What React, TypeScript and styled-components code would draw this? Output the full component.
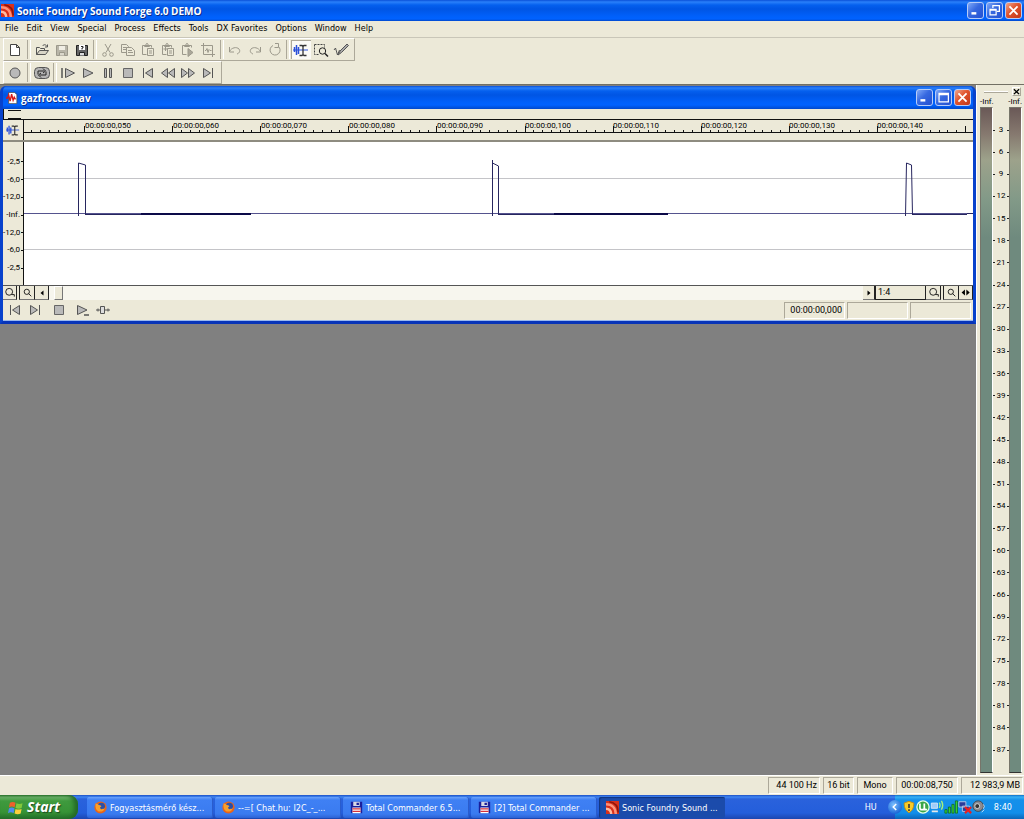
import React from "react";
import styled, { createGlobalStyle, css } from "styled-components";

const face = "#ece9d8";
const shade = "#aca899";
const uiFont = '"DejaVu Sans Condensed", "DejaVu Sans", sans-serif';
const numFont = 'Roboto, "Liberation Sans", sans-serif';
const titleFont = '"Open Sans", "Noto Sans", sans-serif';

const GlobalStyle = createGlobalStyle`
  * { box-sizing: border-box; }
  body { margin: 0; background: #808080; font: 9px/12px ${uiFont}; color: #000; }
  button { margin: 0; padding: 0; border: 0; background: none; font: inherit; color: inherit; }
  svg { display: block; }
`;

const Desktop = styled.div`
  min-height: 100vh;
  display: flex;
  flex-direction: column;
`;

/* ---------- title bars ---------- */

const TitleBar = styled.header<{ $child?: boolean }>`
  display: flex;
  align-items: center;
  gap: 3px;
  height: ${(p) => (p.$child ? 23 : 21)}px;
  padding: 0 2px 0 ${(p) => (p.$child ? 3 : 1)}px;
  background: linear-gradient(#0a50d8 0, #2a80fa 2px, #0560ee 5px, #0055e4 9px, #0060fa 16px, #0062ff 19px, #0048cc 100%);
  border-radius: ${(p) => (p.$child ? "5px 5px 0 0" : "0")};
`;

const TitleText = styled.h1`
  flex: 1;
  margin: 0;
  font: bold 10px/14px ${titleFont};
  color: #fff;
  text-shadow: 1px 1px 0 #0a2f8c;
  white-space: nowrap;
`;

const WindowButtons = styled.div`
  display: flex;
  gap: 2px;
`;

const CaptionButton = styled.button<{ $close?: boolean }>`
  width: 17px;
  height: 17px;
  border: 1px solid #b8ccf8;
  border-radius: 3px;
  display: grid;
  place-items: center;
  background: ${(p) =>
    p.$close
      ? "linear-gradient(135deg, #f0a58c, #e0532c 45%, #c2371a)"
      : "linear-gradient(135deg, #7fa8f8, #3668e0 45%, #2450d0)"};
`;

/* ---------- menu and toolbars ---------- */

const MenuBar = styled.nav`
  display: flex;
  align-items: flex-start;
  gap: 8px;
  height: 17px;
  padding: 0 5px;
  background: ${face};
  border-bottom: 1px solid #c9c6b8;
`;

const MenuItem = styled.button`
  line-height: 14px;
  white-space: nowrap;
`;

const ToolRow = styled.div`
  display: flex;
  height: 23px;
  background: ${face};
`;

const ToolBar = styled.div`
  display: flex;
  align-items: center;
  margin-left: 3px;
  padding-right: 3px;
  border: 1px solid #fff;
  border-right-color: ${shade};
  border-bottom-color: ${shade};
  padding-left: 1px;
`;

const Separator = styled.span<{ $w: number }>`
  width: ${(p) => p.$w}px;
  height: 19px;
  display: flex;
  justify-content: center;
  &::before {
    content: "";
    width: 2px;
    border-left: 1px solid ${shade};
    border-right: 1px solid #fff;
  }
`;

const ToolButton = styled.button<{ $on?: boolean }>`
  width: 20px;
  height: 19px;
  display: grid;
  place-items: center;
  &:disabled { color: #9b988b; }
  ${(p) =>
    p.$on &&
    css`
      background: #fbfaf5;
      box-shadow: inset 1px 1px 0 ${shade};
    `}
`;

/* ---------- work area ---------- */

const Main = styled.main`
  flex: 1;
  display: flex;
  align-items: stretch;
  border-top: 1px solid #716f64;
`;

const Workspace = styled.section`
  flex: 1;
  min-width: 0;
  background: #808080;
`;

const ChildWindow = styled.article`
  margin-top: 1px;
  border-radius: 6px 6px 0 0;
  border: solid #0842cc;
  border-width: 0 3px 3px;
  border-bottom-color: #0734b8;
  background: #0058e8;
`;

const WindowBody = styled.div`
  background: ${face};
`;

const Overview = styled.div`
  height: 11px;
  display: flex;
  padding: 1px 0 0 4px;
  border-bottom: 1px solid #111;
  border-left: 1px solid #111;
  &::before {
    content: "";
    width: 13px;
    border: 1px solid #111;
    border-width: 1px 0;
  }
`;

const RulerRow = styled.div`
  display: flex;
  height: 22px;
  border-bottom: 2px solid #8e8c80;
`;

const Corner = styled.button`
  width: 21px;
  display: grid;
  place-items: center;
  border-right: 1px solid #111;
`;

const Ruler = styled.div`
  flex: 1;
  min-width: 0;
  overflow: hidden;
`;

const TimeLabels = styled.ol`
  margin: 0;
  padding: 1px 0 0 61px;
  height: 6px;
  display: flex;
  list-style: none;
  font: 8px/9px ${numFont};
`;

const TimeLabel = styled.li`
  flex: 0 0 88px;
`;

const WaveRow = styled.div`
  display: flex;
  height: 144px;
  border-bottom: 1px solid #555;
`;

const LevelScale = styled.ol`
  width: 21px;
  margin: 0;
  padding: 11px 0 8px;
  list-style: none;
  display: flex;
  flex-direction: column;
  border-right: 1px solid #111;
  font: 8px/10px ${numFont};
`;

const Level = styled.li`
  flex: 1;
  display: flex;
  align-items: center;
  justify-content: flex-end;
  gap: 1px;
  &::after {
    content: "";
    width: 2px;
    height: 1px;
    background: #111;
  }
`;

const WaveArea = styled.div`
  flex: 1;
  min-width: 0;
  background: #fff;
  svg { width: 100%; height: 143px; }
`;

const ScrollRow = styled.div`
  display: flex;
  height: 14px;
  background: ${face};
`;

const MiniButton = styled.button<{ $w: number; $gap?: boolean }>`
  width: ${(p) => p.$w}px;
  display: grid;
  place-items: center;
  border-right: 1px solid #222;
  border-bottom: 1px solid #777;
  ${(p) => p.$gap && css`
    border-left: 1px solid #222;
    margin-left: 2px;
  `}
`;

const Track = styled.div`
  flex: 1;
  display: flex;
  padding-left: 5px;
  background: #f7f6ee;
`;

const Thumb = styled.div`
  width: 9px;
  background: ${face};
  border: 1px solid #fff;
  border-right-color: #777;
  border-bottom-color: #777;
`;

const Ratio = styled.output`
  width: 51px;
  padding-left: 2px;
  border: solid #222;
  border-width: 0 1px 1px;
  font: 9px/13px ${numFont};
`;

const Transport = styled.div`
  display: flex;
  align-items: center;
  height: 21px;
  padding: 0 2px;
  border-bottom: 1px solid #9ab8f0;
`;

const TransportButton = styled.button<{ $before?: number }>`
  width: 20px;
  height: 18px;
  margin-left: ${(p) => p.$before ?? 0}px;
  display: grid;
  place-items: center;
`;

const Fill = styled.div`
  flex: 1;
`;

const Sunken = styled.output<{ $w: number; $end?: boolean }>`
  flex: 0 0 ${(p) => p.$w}px;
  height: 17px;
  padding: 0 ${(p) => (p.$end ? 2 : 0)}px;
  text-align: ${(p) => (p.$end ? "right" : "center")};
  border: 1px solid ${shade};
  border-right-color: #fff;
  border-bottom-color: #fff;
  font: 9px/15px ${numFont};
  white-space: nowrap;
`;

const Boxes = styled.div`
  display: flex;
  gap: 2px;
`;

/* ---------- level meters ---------- */

const MeterPanel = styled.aside`
  width: 48px;
  display: flex;
  flex-direction: column;
  background: ${face};
  border-left: 1px solid #fff;
  padding: 0 2px 2px 3px;
`;

const MeterHead = styled.div`
  display: flex;
  align-items: center;
  gap: 4px;
  height: 12px;
  padding: 1px 1px 0 4px;
`;

const Grip = styled.span`
  flex: 1;
  height: 2px;
  border-top: 1px solid #fff;
  border-bottom: 1px solid ${shade};
`;

const CloseSmall = styled.button`
  width: 9px;
  height: 9px;
  display: grid;
  place-items: center;
  border: 1px solid #fff;
  border-right-color: ${shade};
  border-bottom-color: ${shade};
`;

const Peaks = styled.div`
  display: flex;
  justify-content: space-between;
  height: 10px;
  font: 8px/10px ${numFont};
`;

const Meters = styled.div`
  flex: 1;
  display: flex;
`;

const Bar = styled.div`
  width: 13px;
  border: 1px solid #77756a;
  border-right-color: #fff;
  border-bottom-color: #333;
  background: linear-gradient(#6a5957 0, #86796f 26px, #9da28b 52px, #839a88 90px, #6f8a7e 130px, #6f8a7e 100%);
`;

const MeterScale = styled.ol`
  flex: 1;
  margin: 0;
  padding: 12px 0;
  list-style: none;
  display: flex;
  flex-direction: column;
  font: 8px/10px ${numFont};
`;

const MeterMark = styled.li`
  flex: 1;
  display: flex;
  align-items: center;
  justify-content: space-between;
  &::before, &::after {
    content: "";
    width: 2px;
    height: 1px;
    background: #222;
  }
`;

/* ---------- status bar and taskbar ---------- */

const StatusBar = styled.footer`
  height: 20px;
  display: flex;
  align-items: center;
  justify-content: flex-end;
  gap: 3px;
  padding: 0 1px;
  background: ${face};
  border-top: 1px solid #fff;
`;

const TaskBar = styled.nav`
  height: 24px;
  display: flex;
  background: linear-gradient(#1d4fc4 0, #3f86f2 2px, #2a62dc 4px, #245edb 18px, #1c46b0 100%);
`;

const StartButton = styled.button`
  flex: 0 0 78px;
  display: flex;
  align-items: center;
  gap: 4px;
  padding-left: 8px;
  margin-right: 9px;
  border-radius: 0 9px 9px 0;
  background: linear-gradient(#2f7a30 0, #6fb46c 2px, #3f9a3e 6px, #379336 17px, #24702a 100%);
  box-shadow: inset -4px 0 4px #246a28;
  color: #fff;
  font: italic bold 14px/20px ${titleFont};
  text-shadow: 1px 1px 1px #1c4a1e;
`;

const Tasks = styled.div`
  flex: 1;
  min-width: 0;
  display: flex;
  gap: 2px;
  padding: 2px 0 1px;
`;

const Task = styled.button<{ $active?: boolean }>`
  flex: 0 1 126px;
  min-width: 0;
  display: flex;
  align-items: center;
  gap: 3px;
  padding: 0 7px;
  border-radius: 2px;
  color: #fff;
  white-space: nowrap;
  overflow: hidden;
  background: ${(p) =>
    p.$active ? "#1b4bab" : "linear-gradient(#6aa2fa 0, #3f80f4 3px, #3a7bf0 17px, #2c62d4 100%)"};
  box-shadow: ${(p) => (p.$active ? "inset 1px 1px 1px #12357f" : "inset -1px 0 0 #2a5ccc")};
`;

const Language = styled.span`
  align-self: center;
  margin-right: 18px;
  color: #fff;
`;

const Tray = styled.div`
  display: flex;
  align-items: center;
  padding-right: 12px;
  background: linear-gradient(#0f6fc8 0, #38b0f4 2px, #1590ea 5px, #118eea 18px, #0b66b8 100%);
  color: #fff;
`;

const TrayToggle = styled.button`
  width: 14px;
  height: 14px;
  margin-left: -7px;
  border-radius: 7px;
  display: grid;
  place-items: center;
  background: radial-gradient(circle at 40% 35%, #7cc0ff, #1f6ad8 70%);
`;

const Clock = styled.time`
  margin-left: 8px;
`;

/* ---------- icons ---------- */

const Glyph = ({ children, size = 16 }: { children: React.ReactNode; size?: number }) => (
  <svg width={size} height={size} viewBox="0 0 16 16" fill="none" stroke="currentColor" aria-hidden="true">
    {children}
  </svg>
);

const metal = "#b9b9b9";
const ink = "#555";

const clipboard = (
  <>
    <path d="M2.500 3.500h9v2M2.500 3.500v9h4M4.500 4.500v-1h1l1-2h1l1 2h1v1z" />
    <path d="M7.500 6.500h6v7h-6zM9 9h3M9 11h3" />
  </>
);

const art: Record<string, React.ReactNode> = {
  new: <path d="M3.500 2.500h6l3 3v8h-9zM9.500 2.500v3h3" fill="#fff" stroke="#444" />,
  open: (
    <g stroke={ink}>
      <path d="M2.500 12.500v-7h3l1 1h4v2" />
      <path d="M2.500 12.500l3-4h9l-3 4z" fill="#d8d5c8" />
      <path d="M8.500 4c1.500-2 3.500-1.500 4.500 0.500M13.500 2.500v2.500h-2.500" />
    </g>
  ),
  save: (
    <>
      <path d="M2.500 3.500h11v10h-11z" fill="#b8b5a8" />
      <path d="M5 4h6v4h-6z" fill="#f0eee4" stroke="none" />
      <path d="M5.500 13.500v-3h5v3" fill="#dad7ca" />
    </>
  ),
  saveAs: (
    <>
      <path d="M2.500 3.500h11v10h-11z" fill="#666" stroke="#222" />
      <path d="M5 3h6v5h-6z" fill="#fff" stroke="none" />
      <path d="M7 4.500h2v1.500h-1v1.500" stroke="#222" />
      <path d="M5.500 13.500v-3h5v3" fill="#ddd" stroke="#222" />
    </>
  ),
  cut: (
    <>
      <path d="M5 2l5 8.500M11 2l-5 8.500" />
      <circle cx="4.500" cy="12.500" r="1.800" />
      <circle cx="11.500" cy="12.500" r="1.800" />
    </>
  ),
  copy: (
    <>
      <path d="M1.500 2.500h5l2 2v6h-7zM3 5.500h4M3 7.500h4" />
      <path d="M6.500 5.500h5l3 3v5h-8z" fill={face} />
      <path d="M8 8.500h4M8 10.500h5" />
    </>
  ),
  paste: clipboard,
  pasteMix: (
    <>
      {clipboard}
      <path d="M3.500 7h4M5.500 5v4" />
    </>
  ),
  pastePlay: (
    <>
      <path d="M2.500 3.500h9v2M2.500 3.500v9h4M4.500 4.500v-1h1l1-2h1l1 2h1v1z" />
      <path d="M8 6.500l5 4-5 4z" fill="#aaa799" />
    </>
  ),
  crop: <path d="M3.500 1v11.500h11.500M1 3.500h11.500v11.500M5 8.500h1l1-2 1 4 1-3 1 1h1.500" />,
  undo: <path d="M2.500 5v5h4.500M2.500 9.500c2-4 7-5 9.500-2.500 1.500 2 0.500 4-2 5" />,
  redo: <path d="M13.500 5v5h-4.500M13.500 9.500c-2-4-7-5-9.500-2.500-1.500 2-0.500 4 2 5" />,
  repeat: <path d="M11 4a5 5 0 1 1-5-0.500M8 1.500h3.500v4h-4" />,
  edit: (
    <>
      <path d="M1.500 5v5M3.500 3v10M5.500 5v7" stroke="#2b50d8" strokeWidth="1.500" />
      <path d="M0 8h15" stroke="#2b50d8" />
      <path d="M6.500 3.500h2.500l1 1 1-1h2.500M10 4v9M6.500 13.500h2.500l1-1 1 1h2.500" stroke="#333" strokeWidth="1.300" />
    </>
  ),
  magnify: (
    <>
      <path d="M1.500 2.500h10v3M1.500 2.500v10h4" stroke="#444" strokeDasharray="2 1" />
      <circle cx="9.500" cy="9" r="3.200" stroke="#222" />
      <path d="M12 11.500l3 3" stroke="#222" strokeWidth="1.500" />
    </>
  ),
  pencil: (
    <g stroke={ink}>
      <path d="M1 8l1.500-2 2 7 2-5" />
      <path d="M5 13l2-4 7-7 1.500 1.500-7 7z" fill="#aaa" />
    </g>
  ),
  record: <circle cx="8" cy="8" r="5" fill={metal} stroke="#555" />,
  loop: (
    <g stroke={ink}>
      <rect x="0.500" y="2.500" width="15" height="11" rx="4" fill="#b4b4b4" />
      <path d="M4 9.500v-3.500h6M9 3.500l2.500 2.500-2.500 2M12 6.500v3.500h-6M7 8l-2.500 2 2.500 2.500" stroke="#222" />
    </g>
  ),
  playAll: (
    <g stroke={ink} fill={metal}>
      <path d="M2 3v10" strokeWidth="1.500" />
      <path d="M5.500 3.500l9 4.500-9 4.500z" />
    </g>
  ),
  play: <path d="M3.500 3.500l9.500 4.500-9.500 4.500z" fill={metal} stroke={ink} />,
  pause: <path d="M4.500 3.500h2v9h-2zM9.500 3.500h2v9h-2z" fill={metal} stroke={ink} />,
  stop: <path d="M3.500 3.500h9v9h-9z" fill={metal} stroke="#666" />,
  toStart: <path d="M3.500 3v10M12.500 3.500v9l-7-4.500z" fill={metal} stroke={ink} />,
  toEnd: <path d="M12.500 3v10M3.500 3.500v9l7-4.500z" fill={metal} stroke={ink} />,
  rewind: <path d="M7.500 3.500v9l-6-4.500zM14.500 3.500v9l-6-4.500z" fill={metal} stroke={ink} />,
  forward: <path d="M1.500 3.500v9l6-4.500zM8.500 3.500v9l6-4.500z" fill={metal} stroke={ink} />,
  playCursor: (
    <g stroke={ink}>
      <path d="M2.500 3.500l9.500 4.500-9.500 4.500z" fill={metal} />
      <path d="M9 13h5" strokeWidth="1.500" />
    </g>
  ),
  slider: (
    <g stroke={ink}>
      <path d="M1 8h14M3 6.500v3M13 6.500v3" />
      <path d="M5.500 4.500h4v7h-4z" fill="#ddd" />
    </g>
  ),
  zoomBig: (
    <g stroke="#111" strokeWidth="1.300">
      <circle cx="7.500" cy="7" r="5" />
      <path d="M11 11h4v3" />
    </g>
  ),
  zoomSmall: (
    <g stroke="#111" strokeWidth="1.300">
      <circle cx="7" cy="7" r="3.800" />
      <path d="M9.500 9.500l4 4" />
    </g>
  ),
  left: <path d="M11 3v10l-6-5z" fill="#000" stroke="none" />,
  right: <path d="M5 3v10l6-5z" fill="#000" stroke="none" />,
  both: <path d="M7 2.500v11l-6-5.500zM9.500 2.500v11l6-5.500z" fill="#000" stroke="none" />,
  minimize: <path d="M3 11.500h6" stroke="#fff" strokeWidth="3" />,
  restore: (
    <g stroke="#fff" strokeWidth="1.500">
      <path d="M6 5v-3h8v7h-3" />
      <path d="M2.500 6.500h7.500v7h-7.500zM2.500 7.500h7.500" />
    </g>
  ),
  maximize: <path d="M2.500 3h11.500v10.500h-11.500zM2.500 4.500h11.500" stroke="#fff" strokeWidth="1.500" />,
  close: <path d="M3 3l10 10M13 3l-10 10" stroke="#fff" strokeWidth="2.200" />,
  closeDark: <path d="M2 3l12 11M14 3l-12 11" stroke="#000" strokeWidth="3" />,
  forge: (
    <>
      <rect width="16" height="16" fill="#d8301c" stroke="none" />
      <path d="M0 4c8 0 12 5 12 12" stroke="#ff9078" strokeWidth="3" />
      <path d="M0 9.500c4 0 6 2 6.500 6.500" stroke="#ffb9a0" strokeWidth="3" />
      <path d="M4 1c7 1 11 6 11 13" stroke="#8e150a" strokeWidth="1.800" />
    </>
  ),
  wave: (
    <>
      <path d="M3.500 0.500h8l3 3v12h-11z" fill="#fff" stroke="#444" />
      <path d="M0 8h2l1.500-4 2 8 2-9 2 8 1.500-4 1 2h1" stroke="#d81818" strokeWidth="1.800" />
    </>
  ),
  firefox: (
    <>
      <circle cx="8" cy="8" r="7.500" fill="#e8641a" stroke="none" />
      <circle cx="9" cy="6.500" r="4.500" fill="#2b4fa8" stroke="none" />
      <path d="M2 3c2 0 3 1 4 2 2 0 3 1 3 2-2 0-2 2 0 3 2 0 3 0 4-2 0 4-3 5-6 5s-6-4-5-10z" fill="#f8a02c" stroke="none" />
    </>
  ),
  floppy: (
    <g stroke="none">
      <path d="M1 1h14v14h-13l-1-1z" fill="#1b1f9c" />
      <path d="M4 1h8v5h-8z" fill="#d8d8e4" />
      <path d="M8 2h3v3h-3z" fill="#1b1f9c" />
      <path d="M3 8h10v7h-10z" fill="#fff" />
      <path d="M3 9h10v1.500h-10zM3 12h10v1.500h-10z" fill="#d8323a" />
    </g>
  ),
  windows: (
    <g stroke="none">
      <path d="M2 3q3-2 6 0l-1 5q-3-2-6 0z" fill="#f0602c" />
      <path d="M9 3.500q3 1.500 6.500 0l-1 5q-3 1.500-6.500 0z" fill="#84c83c" />
      <path d="M1 9q3-2 6 0l-1 5q-3-2-6 0z" fill="#4c8cf0" />
      <path d="M8 9.500q3 1.500 6.500 0l-1 5q-3 1.500-6.500 0z" fill="#fcd03c" />
    </g>
  ),
  chevron: <path d="M10.500 2l-6 6 6 6" stroke="#fff" strokeWidth="3" />,
  shield: (
    <>
      <path d="M8 1.500l5.500 2c0 6-2 9-5.500 11-3.500-2-5.500-5-5.500-11z" fill="#f8cc28" stroke="#c08a10" />
      <path d="M8 4.500v4.500M8 10.500v2" stroke="#333" strokeWidth="1.800" />
    </>
  ),
  utorrent: (
    <>
      <circle cx="8" cy="8" r="7" fill="#3aa648" stroke="#e6ffe6" strokeWidth="1.500" />
      <path d="M4.500 4v5q0 2 2.500 2t2.500-2v-5M9.500 9q0 2 3 2" stroke="#fff" strokeWidth="2" />
    </>
  ),
  wireless: (
    <>
      <path d="M1.500 3.500h7v6h-7z" fill="#9fccf8" stroke="#dce8f8" />
      <path d="M2 13h7" stroke="#e8e8e8" strokeWidth="2" />
      <path d="M10.500 3q2 3 0 6M13 1q3 5 0 10" stroke="#a4f07c" strokeWidth="1.600" />
    </>
  ),
  signal: (
    <path d="M1 11h2.500v4h-2.500zM5 8h2.500v7h-2.500zM9 5h2.500v10h-2.500zM13 1h2.500v14h-2.500z" fill="#34d034" stroke="#0e6018" strokeWidth="0.800" />
  ),
  network: (
    <>
      <path d="M1 2h8v6h-8zM5 7h8v6h-8z" fill="#2a3c9c" stroke="#c4d0e8" />
      <path d="M8 8l7 7M15 8l-7 7" stroke="#e82020" strokeWidth="2.500" />
    </>
  ),
  volume: (
    <>
      <circle cx="7" cy="7" r="6" fill="#8a8a90" stroke="#444" />
      <circle cx="6" cy="7" r="2.800" fill="#333" stroke="#ddd" />
      <path d="M11 14l3-3M13 5q2 2 0 5" stroke="#e0e8f0" />
    </>
  ),
};

const Icon = ({ name, size }: { name: string; size?: number }) => <Glyph size={size}>{art[name]}</Glyph>;

/* ---------- data ---------- */

const menus = ["File", "Edit", "View", "Special", "Process", "Effects", "Tools", "DX Favorites", "Options", "Window", "Help"];

type Tool = { icon: string; label: string; off?: boolean; on?: boolean } | number;

const fileTools: Tool[] = [
  { icon: "new", label: "New" },
  7,
  { icon: "open", label: "Open" },
  { icon: "save", label: "Save", off: true },
  { icon: "saveAs", label: "Save As" },
  6,
  { icon: "cut", label: "Cut", off: true },
  { icon: "copy", label: "Copy", off: true },
  { icon: "paste", label: "Paste", off: true },
  { icon: "pasteMix", label: "Mix", off: true },
  { icon: "pastePlay", label: "Play Clipboard", off: true },
  { icon: "crop", label: "Trim", off: true },
  7,
  { icon: "undo", label: "Undo", off: true },
  { icon: "redo", label: "Redo", off: true },
  { icon: "repeat", label: "Repeat", off: true },
  6,
  { icon: "edit", label: "Edit Tool", on: true },
  { icon: "magnify", label: "Magnify Tool" },
  { icon: "pencil", label: "Pencil Tool" },
];

const playTools: Tool[] = [
  { icon: "record", label: "Record" },
  7,
  { icon: "loop", label: "Loop Playback" },
  6,
  { icon: "playAll", label: "Play All" },
  { icon: "play", label: "Play" },
  { icon: "pause", label: "Pause" },
  { icon: "stop", label: "Stop" },
  { icon: "toStart", label: "Go to Start" },
  { icon: "rewind", label: "Rewind" },
  { icon: "forward", label: "Forward" },
  { icon: "toEnd", label: "Go to End" },
];

const times = ["050", "060", "070", "080", "090", "100", "110", "120", "130", "140"];
const levels = ["-2,5", "-6,0", "-12,0", "-Inf.", "-12,0", "-6,0", "-2,5"];
const marks = Array.from({ length: 29 }, (_, i) => (i + 1) * 3);

const tasks = [
  { icon: "firefox", title: "Fogyasztásmérő kész..." },
  { icon: "firefox", title: "--=[ Chat.hu: I2C_-_..." },
  { icon: "floppy", title: "Total Commander 6.5..." },
  { icon: "floppy", title: "[2] Total Commander ..." },
  { icon: "forge", title: "Sonic Foundry Sound ...", active: true },
];

const trayIcons = ["shield", "utorrent", "wireless", "signal", "network", "volume"];

const ticks = Array.from({ length: 108 }, (_, i) => {
  const x = Math.round(60 + (i - 6) * 8.81);
  return i % 10 === 6 ? `M${x}.5 0v6` : `M${x}.5 4v2`;
}).join("");

const Tools = ({ items, label }: { items: Tool[]; label: string }) => (
  <ToolRow>
    <ToolBar role="toolbar" aria-label={label}>
      {items.map((t, i) =>
        typeof t === "number" ? (
          <Separator key={i} $w={t} />
        ) : (
          <ToolButton key={i} aria-label={t.label} disabled={t.off} $on={t.on}>
            <Icon name={t.icon} />
          </ToolButton>
        )
      )}
    </ToolBar>
  </ToolRow>
);

const Caption = ({ middle }: { middle: "restore" | "maximize" }) => (
  <WindowButtons>
    <CaptionButton aria-label="Minimize"><Icon name="minimize" size={13} /></CaptionButton>
    <CaptionButton aria-label={middle}><Icon name={middle} size={13} /></CaptionButton>
    <CaptionButton aria-label="Close" $close><Icon name="close" size={13} /></CaptionButton>
  </WindowButtons>
);

const Waveform = () => (
  <svg viewBox="0 0 949 143" preserveAspectRatio="none" fill="none" role="img" aria-label="Waveform">
    <path d="M0 36.500h949M0 107.500h949" stroke="#c4c4c8" />
    <path d="M0 71.500h949" stroke="#55538e" />
    <g stroke="#27265f">
      <path d="M54.500 74v-53l7 2v50" />
      <path d="M62 72.500h55" />
      <path d="M117 72h110" stroke="#0c0a48" strokeWidth="2" />
      <path d="M468.500 74v-56v3l6 3v49" />
      <path d="M475 72.500h55" />
      <path d="M530 72h114" stroke="#0c0a48" strokeWidth="2" />
      <path d="M881.500 74l1-53 5 2 1 50" />
      <path d="M888 72.500h55M943 71.500h6" />
    </g>
  </svg>
);

export default function App() {
  return (
    <Desktop>
      <GlobalStyle />
      <TitleBar>
        <Icon name="forge" size={13} />
        <TitleText>Sonic Foundry Sound Forge 6.0 DEMO</TitleText>
        <Caption middle="restore" />
      </TitleBar>
      <MenuBar>
        {menus.map((m) => (
          <MenuItem key={m}>{m}</MenuItem>
        ))}
      </MenuBar>
      <Tools items={fileTools} label="Standard" />
      <Tools items={playTools} label="Transport" />

      <Main>
        <Workspace>
          <ChildWindow>
            <TitleBar $child>
              <Icon name="wave" size={12} />
              <TitleText as="h2">gazfroccs.wav</TitleText>
              <Caption middle="maximize" />
            </TitleBar>
            <WindowBody>
              <Overview />
              <RulerRow>
                <Corner aria-label="Edit tool"><Icon name="edit" size={14} /></Corner>
                <Ruler>
                  <TimeLabels>
                    {times.map((t) => (
                      <TimeLabel key={t}>00:00:00,{t}</TimeLabel>
                    ))}
                  </TimeLabels>
                  <svg width="100%" height="7" stroke="#111" fill="none" aria-hidden="true">
                    <path d={ticks} />
                    <line x1="0" y1="6.500" x2="100%" y2="6.500" />
                  </svg>
                </Ruler>
              </RulerRow>
              <WaveRow>
                <LevelScale>
                  {levels.map((l, i) => (
                    <Level key={i}>{l}</Level>
                  ))}
                </LevelScale>
                <WaveArea><Waveform /></WaveArea>
              </WaveRow>
              <ScrollRow>
                <MiniButton $w={14} aria-label="Zoom in level"><Icon name="zoomBig" size={11} /></MiniButton>
                <MiniButton $w={16} $gap aria-label="Zoom out level"><Icon name="zoomSmall" size={11} /></MiniButton>
                <MiniButton $w={14} aria-label="Scroll left"><Icon name="left" size={8} /></MiniButton>
                <Track><Thumb /></Track>
                <MiniButton $w={12} aria-label="Scroll right"><Icon name="right" size={8} /></MiniButton>
                <Ratio>1:4</Ratio>
                <MiniButton $w={15} aria-label="Zoom in time"><Icon name="zoomBig" size={11} /></MiniButton>
                <MiniButton $w={16} $gap aria-label="Zoom out time"><Icon name="zoomSmall" size={11} /></MiniButton>
                <MiniButton $w={14} aria-label="Zoom to selection"><Icon name="both" size={9} /></MiniButton>
              </ScrollRow>
              <Transport>
                <TransportButton aria-label="Go to start"><Icon name="toStart" /></TransportButton>
                <TransportButton aria-label="Go to end"><Icon name="toEnd" /></TransportButton>
                <TransportButton $before={4} aria-label="Stop"><Icon name="stop" /></TransportButton>
                <TransportButton $before={4} aria-label="Play"><Icon name="playCursor" /></TransportButton>
                <TransportButton aria-label="Scrub"><Icon name="slider" /></TransportButton>
                <Fill />
                <Boxes>
                  <Sunken $w={61} $end>00:00:00,000</Sunken>
                  <Sunken $w={61} />
                  <Sunken $w={61} />
                </Boxes>
              </Transport>
            </WindowBody>
          </ChildWindow>
        </Workspace>

        <MeterPanel>
          <MeterHead>
            <Grip />
            <CloseSmall aria-label="Close meters"><Icon name="closeDark" size={7} /></CloseSmall>
          </MeterHead>
          <Peaks>
            <span>-Inf.</span>
            <span>-Inf.</span>
          </Peaks>
          <Meters>
            <Bar />
            <MeterScale>
              {marks.map((m) => (
                <MeterMark key={m}>{m}</MeterMark>
              ))}
            </MeterScale>
            <Bar />
          </Meters>
        </MeterPanel>
      </Main>

      <StatusBar>
        <Sunken $w={52} $end>44 100 Hz</Sunken>
        <Sunken $w={31}>16 bit</Sunken>
        <Sunken $w={36}>Mono</Sunken>
        <Sunken $w={62}>00:00:08,750</Sunken>
        <Sunken $w={62} $end>12 983,9 MB</Sunken>
      </StatusBar>

      <TaskBar>
        <StartButton>
          <Icon name="windows" size={15} />
          Start
        </StartButton>
        <Tasks>
          {tasks.map((t) => (
            <Task key={t.title} $active={t.active}>
              <Icon name={t.icon} size={13} />
              {t.title}
            </Task>
          ))}
        </Tasks>
        <Language>HU</Language>
        <Tray>
          <TrayToggle aria-label="Show hidden icons"><Icon name="chevron" size={8} /></TrayToggle>
          {trayIcons.map((t) => (
            <Icon key={t} name={t} size={14} />
          ))}
          <Clock>8:40</Clock>
        </Tray>
      </TaskBar>
    </Desktop>
  );
}
